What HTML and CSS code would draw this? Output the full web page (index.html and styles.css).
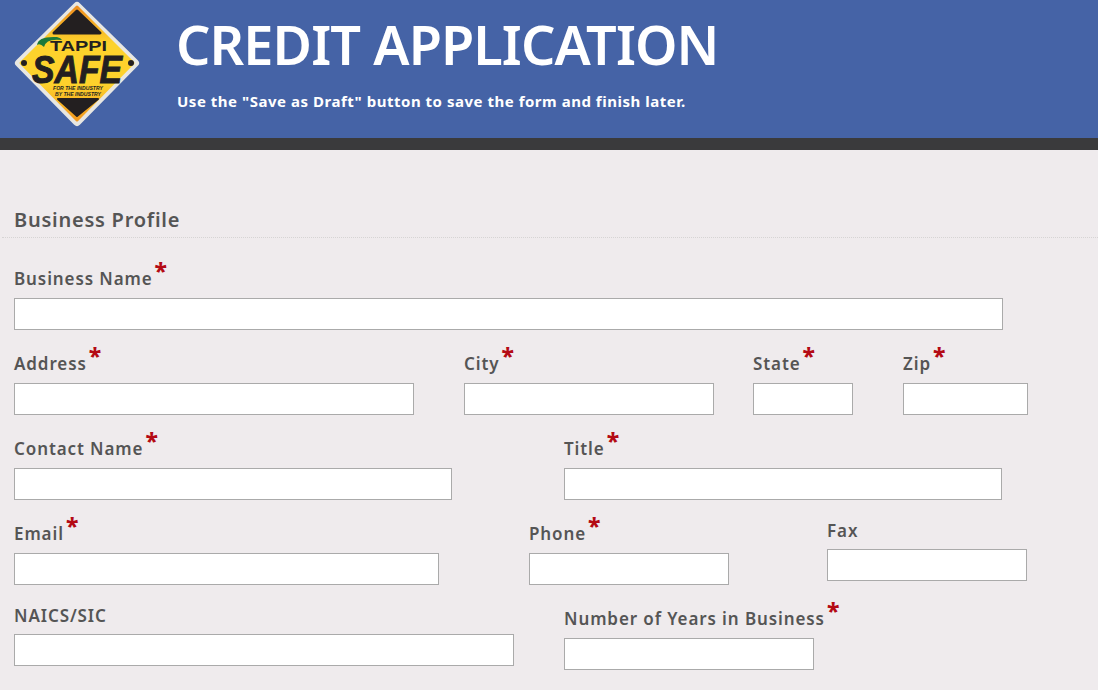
FILE: index.html
```html
<!DOCTYPE html>
<html lang="en">
  <head>
    <meta charset="utf-8" />
    <title>Credit Application</title>
    <link rel="stylesheet" href="styles.css">
  </head>
  <body>
    <header class="banner">
      <svg class="logo" width="140" height="138" viewBox="0 0 140 138">
        <defs>
          <linearGradient id="gold" x1="0" y1="0" x2="0" y2="1">
            <stop offset="0" stop-color="#ee8f1f" />
            <stop offset="0.32" stop-color="#fdd22c" />
            <stop offset="0.68" stop-color="#fdd22c" />
            <stop offset="1" stop-color="#f29a20" />
          </linearGradient>
        </defs>
        <path d="M77 6 L135 63 L77 122 L19 63Z" fill="#e8e7e2" stroke="#e8e7e2" stroke-width="8" stroke-linejoin="round" />
        <path d="M77 7 L133 63 L77 120 L21 63Z" fill="url(#gold)" stroke="url(#gold)" stroke-width="3" stroke-linejoin="round" />
        <path d="M77 11 L100 33 L54 33Z" fill="#231f20" stroke="#231f20" stroke-width="3" stroke-linejoin="round" />
        <path d="M58 99 L98 99 L77 116Z" fill="#231f20" stroke="#231f20" stroke-width="2" stroke-linejoin="round" />
        <circle cx="24" cy="63" r="3" fill="#231f20" />
        <circle cx="131" cy="63" r="3" fill="#231f20" />
        <path d="M37 45 Q38 36 57 37 Q61 38 62 40 Q46 38 44 47 Q40 43 37 45Z" fill="#1c7a3a" />
        <text class="logo-tappi" x="50" y="51" textLength="57" lengthAdjust="spacingAndGlyphs">TAPPI</text>
        <text class="logo-safe" x="32" y="83" textLength="90" lengthAdjust="spacingAndGlyphs">SAFE</text>
        <text class="logo-small" x="53" y="90" textLength="50" lengthAdjust="spacingAndGlyphs">FOR THE INDUSTRY</text>
        <text class="logo-small" x="55" y="96" textLength="46" lengthAdjust="spacingAndGlyphs">BY THE INDUSTRY</text>
      </svg>
      <div class="banner-text">
        <h1>CREDIT APPLICATION</h1>
        <p>Use the "Save as Draft" button to save the form and finish later.</p>
      </div>
    </header>

    <main class="form">
      <h2>Business Profile</h2>

      <div class="row">
        <label class="field">
          <span class="lbl lbl-req">Business Name<span class="req">*</span></span>
          <input type="text" class="w989" />
        </label>
      </div>

      <div class="row row-address">
        <label class="field">
          <span class="lbl lbl-req">Address<span class="req">*</span></span>
          <input type="text" class="w400" />
        </label>
        <label class="field">
          <span class="lbl lbl-req">City<span class="req">*</span></span>
          <input type="text" class="w250" />
        </label>
        <label class="field">
          <span class="lbl lbl-req">State<span class="req">*</span></span>
          <input type="text" class="w100" />
        </label>
        <label class="field">
          <span class="lbl lbl-req">Zip<span class="req">*</span></span>
          <input type="text" class="w125" />
        </label>
      </div>

      <div class="row row-contact">
        <label class="field">
          <span class="lbl lbl-req">Contact Name<span class="req">*</span></span>
          <input type="text" class="w438" />
        </label>
        <label class="field">
          <span class="lbl lbl-req">Title<span class="req">*</span></span>
          <input type="text" class="w438" />
        </label>
      </div>

      <div class="row row-email">
        <label class="field">
          <span class="lbl lbl-req">Email<span class="req">*</span></span>
          <input type="text" class="w425" />
        </label>
        <label class="field">
          <span class="lbl lbl-req">Phone<span class="req">*</span></span>
          <input type="text" class="w200" />
        </label>
        <label class="field">
          <span class="lbl">Fax</span>
          <input type="text" class="w200" />
        </label>
      </div>

      <div class="row row-naics">
        <label class="field">
          <span class="lbl">NAICS/SIC</span>
          <input type="text" class="w500" />
        </label>
        <label class="field">
          <span class="lbl lbl-req">Number of Years in Business<span class="req">*</span></span>
          <input type="text" class="w250" />
        </label>
      </div>
    </main>
  </body>
</html>
```

FILE: styles.css
```css
html, body {
  margin: 0;
  height: 690px;
  overflow: hidden;
}

body {
  background-color: #efebed;
  font-family: "Noto Sans", "Open Sans", sans-serif;
  color: #555;
}

.banner {
  display: flex;
  height: 138px;
  background-color: #4563a6;
  border-bottom: 12px solid #3a3a3c;
  color: #fff;
}

.logo {
  flex: none;
}

.logo-tappi {
  font: 700 14px "Liberation Sans", sans-serif;
  fill: #231f20;
}

.logo-safe {
  font: italic 700 39px "Liberation Sans", sans-serif;
  fill: #231f20;
  stroke: #231f20;
  stroke-width: 1px;
}

.logo-small {
  font: italic 700 5px "Liberation Sans", sans-serif;
  fill: #231f20;
}

.banner-text {
  padding: 9px 0 0 37px;
}

.banner-text h1 {
  margin: 0 0 0 -1px;
  font-size: 54px;
  line-height: 70px;
  font-weight: 600;
  letter-spacing: -0.9px;
  white-space: nowrap;
}

.banner-text p {
  margin: 12px 0 0;
  font-size: 15px;
  line-height: 20px;
  font-weight: 700;
  letter-spacing: 0.52px;
}

.form {
  padding-top: 56px;
}

.form h2 {
  margin: 0 0 0 2px;
  padding: 0 0 3px 12px;
  font-size: 20px;
  line-height: 28px;
  font-weight: 600;
  letter-spacing: 0.75px;
  border-bottom: 1px dotted #d6d4d4;
}

.row {
  display: grid;
  align-items: start;
  padding-left: 14px;
  height: 85px;
}

.row:nth-of-type(1) {
  margin-top: 25px;
}

.row-address {
  grid-template-columns: 450px 289px 150px 125px;
}

.row-contact {
  grid-template-columns: 550px 438px;
}

.row-email {
  grid-template-columns: 515px 298px 200px;
}

.row-naics {
  grid-template-columns: 550px 250px;
}

.field {
  display: block;
}

.lbl {
  display: block;
  height: 25px;
  margin-bottom: 6px;
  font-size: 17px;
  line-height: 25px;
  font-weight: 600;
  letter-spacing: 0.9px;
  white-space: nowrap;
}

/* required labels sit a little lower and push the input down */
.lbl-req {
  padding-top: 3px;
  margin-bottom: 7px;
}

.req {
  position: relative;
  top: -5px;
  margin-left: 2px;
  color: #b40a14;
  font-size: 23px;
  line-height: 10px;
  font-weight: 800;
}

input {
  display: block;
  box-sizing: border-box;
  height: 32px;
  margin: 0;
  padding: 0 6px;
  background-color: #fff;
  border: 1px solid #aaa;
  border-radius: 0;
}

.w100 { width: 100px; }
.w125 { width: 125px; }
.w200 { width: 200px; }
.w250 { width: 250px; }
.w400 { width: 400px; }
.w425 { width: 425px; }
.w438 { width: 438px; }
.w500 { width: 500px; }
.w989 { width: 989px; }
```
